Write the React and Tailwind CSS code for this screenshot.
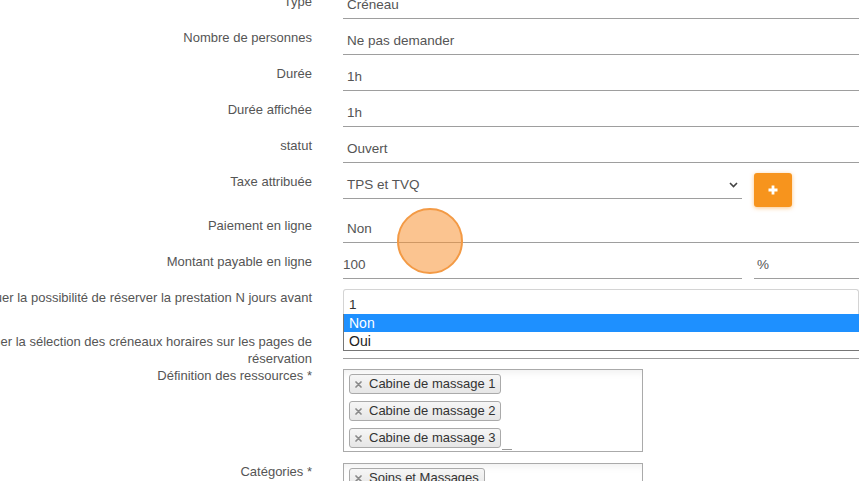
import React from "react";

const labelCls =
  "w-[384px] -ml-[72px] shrink-0 text-right text-[13px] leading-[17px] text-[#555]";

function Row({ label, children, h = "h-[36px]" }) {
  return (
    <div className={`flex ${h}`}>
      <div className={`${labelCls} pt-[9px]`}>{label}</div>
      <div className="ml-[31px] flex-1 min-w-0">{children}</div>
    </div>
  );
}

function Field({ children, className = "pl-[4px]" }) {
  return (
    <div
      className={`h-[35px] border-b border-[#9e9e9e] pt-[13px] text-[13.5px] leading-[16px] text-[#555] whitespace-nowrap ${className}`}
    >
      {children}
    </div>
  );
}

function XIcon() {
  return (
    <svg width="7" height="7" viewBox="0 0 7 7" className="shrink-0">
      <path d="M1 1 L6 6 M6 1 L1 6" stroke="#8a8a8a" strokeWidth="1.7" strokeLinecap="round" />
    </svg>
  );
}

function Tag({ children }) {
  return (
    <div className="flex h-[20px] items-center rounded-[3px] border border-[#aaa] bg-gradient-to-b from-[#f6f6f6] to-[#e6e6e6] pl-[5px] pr-[5px] text-[13px] leading-[18px] text-[#333] whitespace-nowrap">
      <XIcon />
      <span className="ml-[7px]">{children}</span>
    </div>
  );
}

export default function App() {
  return (
    <div className="relative w-[859px] h-[481px] overflow-hidden bg-white font-['Liberation_Sans',Arial,sans-serif]">
      <div className="-mt-[16px] flex flex-col">
        <Row label="Type">
          <Field>Créneau</Field>
        </Row>
        <Row label="Nombre de personnes">
          <Field>Ne pas demander</Field>
        </Row>
        <Row label="Durée">
          <Field>1h</Field>
        </Row>
        <Row label="Durée affichée">
          <Field>1h</Field>
        </Row>
        <Row label="statut">
          <Field>Ouvert</Field>
        </Row>
        <Row label="Taxe attribuée" h="h-[44px]">
          <div className="flex">
            <div className="relative w-[399px]">
              <Field>TPS et TVQ</Field>
              <svg
                width="9"
                height="6"
                viewBox="0 0 9 6"
                className="absolute left-[386px] top-[18px]"
              >
                <path d="M1 1 L4.5 4.5 L8 1" fill="none" stroke="#444" strokeWidth="1.6" />
              </svg>
            </div>
            <div className="ml-[12px] mt-[9px] flex h-[34px] w-[38px] items-center justify-center rounded-[3px] bg-[#f7941d] shadow-[0_1px_4px_rgba(247,148,29,0.55)]">
              <svg width="10" height="10" viewBox="0 0 10 10">
                <path d="M3.6 0.5 H6.4 V3.6 H9.5 V6.4 H6.4 V9.5 H3.6 V6.4 H0.5 V3.6 H3.6 Z" fill="#fff" />
              </svg>
            </div>
          </div>
        </Row>
        <Row label="Paiement en ligne">
          <Field>Non</Field>
        </Row>
        <Row label="Montant payable en ligne">
          <div className="flex">
            <div className="w-[399px]">
              <Field className="pl-0">100</Field>
            </div>
            <div className="ml-[12px] flex-1">
              <Field className="pl-[3px]">%</Field>
            </div>
          </div>
        </Row>
        <Row
          label="Bloquer la possibilité de réserver la prestation N jours avant"
          h="h-[44px]"
        >
          <div className="relative pt-[9px]">
            <div className="h-[25px] rounded-t-[3px] border-x border-t border-[#d4d4d4] pl-[5px] pt-[7px] text-[13.5px] leading-[16px] text-[#333]">
              1
            </div>
            <div className="absolute left-0 right-[-10px] top-[34px] z-10 border border-t-0 border-[#767676] bg-white text-[14px] leading-[18px]">
              <div className="h-[18px] bg-[#1e90ff] pl-[5px] text-white">Non</div>
              <div className="h-[18px] pl-[5px] text-[#222]">Oui</div>
            </div>
          </div>
        </Row>
        <div className="flex">
          <div className={`${labelCls} pt-[9px]`}>
            Conditionner la sélection des créneaux horaires sur les pages de réservation
          </div>
          <div className="ml-[31px] flex-1">
            <Field> </Field>
          </div>
        </div>
        <div className="flex">
          <div className={labelCls}>Définition des ressources *</div>
          <div className="ml-[31px] flex-1">
            <div className="mt-[2px] h-[83px] w-[300px] border border-[#aaa] bg-white pl-[5px] pt-[4px] shadow-[inset_0_8px_8px_-6px_rgba(0,0,0,0.07)]">
              <div className="flex flex-col items-start gap-[7px]">
                <Tag>Cabine de massage 1</Tag>
                <Tag>Cabine de massage 2</Tag>
                <div className="flex items-end">
                  <Tag>Cabine de massage 3</Tag>
                  <div className="mb-[-2px] ml-[1px] h-px w-[10px] bg-[#999]" />
                </div>
              </div>
            </div>
          </div>
        </div>
        <div className="mt-[11px] flex">
          <div className={labelCls}>Catégories *</div>
          <div className="ml-[31px] flex-1">
            <div className="h-[60px] w-[300px] border border-[#aaa] bg-white pl-[5px] pt-[4px] shadow-[inset_0_8px_8px_-6px_rgba(0,0,0,0.07)]">
              <div className="flex flex-col items-start">
                <Tag>Soins et Massages</Tag>
              </div>
            </div>
          </div>
        </div>
      </div>
      <div className="pointer-events-none absolute left-[397px] top-[208px] h-[66px] w-[66px] rounded-full border-2 border-[#f39a45] bg-[rgba(247,148,52,0.55)]" />
    </div>
  );
}
